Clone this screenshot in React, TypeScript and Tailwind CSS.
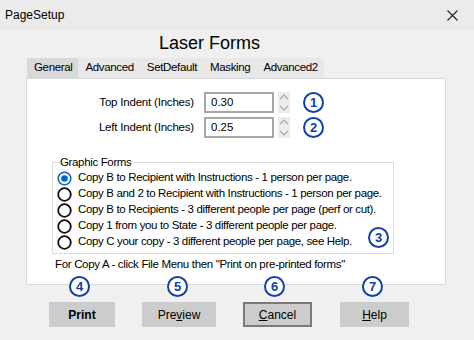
import React from "react";

const F = { fontFamily: '"Liberation Sans", Arial, sans-serif' };

function Circ({ n }: { n: number }) {
  return (
    <div className="w-[21px] h-[21px] rounded-full border-2 border-[#1040a8] bg-white flex items-center justify-center text-[13px] font-bold text-[#1040a8] leading-none">
      {n}
    </div>
  );
}

function Spinner() {
  return (
    <div className="w-[12px] h-[21px] bg-[#ececec] flex flex-col items-center justify-between py-[1px]">
      <svg width="10" height="8" viewBox="0 0 10 8">
        <path d="M1 6 L5 2 L9 6" fill="none" stroke="#a8a8a8" strokeWidth="1.2" />
      </svg>
      <svg width="10" height="8" viewBox="0 0 10 8">
        <path d="M1 2 L5 6 L9 2" fill="none" stroke="#a8a8a8" strokeWidth="1.2" />
      </svg>
    </div>
  );
}

function Radio({ checked, label }: { checked?: boolean; label: string }) {
  return (
    <div className="flex items-center h-[16px]">
      <svg width="15" height="15" viewBox="0 0 15 15" className="shrink-0">
        {checked ? (
          <>
            <circle cx="7.5" cy="7.5" r="6.3" fill="white" stroke="#0a64c8" strokeWidth="1.6" />
            <circle cx="7.5" cy="7.5" r="3.3" fill="#0a64c8" />
          </>
        ) : (
          <circle cx="7.5" cy="7.5" r="6.3" fill="white" stroke="#111" strokeWidth="1.8" />
        )}
      </svg>
      <span className="ml-[6px] text-[11.5px] tracking-[-0.35px] text-black whitespace-nowrap">{label}</span>
    </div>
  );
}

export default function App() {
  const tabs = ["General", "Advanced", "SetDefault", "Masking", "Advanced2"];
  const buttons = [
    { l: <b>Print</b>, n: 4, cls: "w-[66px]", c: "left-[20px]" },
    { l: <span>Pre<u>v</u>iew</span>, n: 5, cls: "w-[74px] ml-[27px]", c: "left-[25px]" },
    { l: <span><u>C</u>ancel</span>, n: 6, focus: true, cls: "w-[69px] ml-[27px]", c: "left-[21px]" },
    { l: <span><u>H</u>elp</span>, n: 7, cls: "w-[69px] ml-[28px]", c: "left-[22px]" },
  ];
  return (
    <div className="w-[474px] h-[340px] bg-[#f0f0f0] relative overflow-hidden flex flex-col" style={F}>
      {/* title bar */}
      <div className="h-[30px] bg-[#ebebeb] flex items-center justify-between pl-[5px] pr-[16px] shrink-0">
        <span className="text-[12px] text-black">PageSetup</span>
        <svg width="11" height="11" viewBox="0 0 11 11">
          <path d="M0.5 0.5 L10.5 10.5 M10.5 0.5 L0.5 10.5" stroke="#222" strokeWidth="1.1" />
        </svg>
      </div>

      <div className="pl-[159px] mt-[3px] h-[20px] text-[18px] leading-[20px] text-black">Laser Forms</div>

      {/* tabs */}
      <div className="mt-[5px] pl-[27px] flex h-[20px]">
        {tabs.map((t, i) => (
          <div
            key={t}
            className={
              "pl-[7px] pr-[6px] h-[20px] flex items-center text-[11.5px] tracking-[-0.35px] text-black " +
              (i === 0 ? "bg-[#d9d9d9]" : "bg-[#e8e8e8]")
            }
          >
            {t}
          </div>
        ))}
      </div>

      {/* panel */}
      <div className="ml-[26px] w-[420px] h-[207px] bg-white border border-[#d9d9d9] pt-[13px]">
        <div className="flex items-center h-[21px]">
          <div className="w-[167px] text-right text-[11.5px] tracking-[-0.2px] text-black">Top Indent (Inches)</div>
          <div className="ml-[10px] w-[70px] h-[21px] border-2 border-[#a6a6a6] flex items-center pl-[5px] text-[11.5px]">0.30</div>
          <div className="ml-[4px]"><Spinner /></div>
          <div className="ml-[13px]"><Circ n={1} /></div>
        </div>
        <div className="flex items-center h-[21px] mt-[4px]">
          <div className="w-[167px] text-right text-[11.5px] tracking-[-0.2px] text-black">Left Indent (Inches)</div>
          <div className="ml-[10px] w-[70px] h-[21px] border-2 border-[#a6a6a6] flex items-center pl-[5px] text-[11.5px]">0.25</div>
          <div className="ml-[4px]"><Spinner /></div>
          <div className="ml-[13px]"><Circ n={2} /></div>
        </div>

        <fieldset className="relative min-w-0 ml-[25px] w-[342px] mt-[17px] border border-[#dcdcdc] pl-[4px] pb-[3px]">
          <legend className="text-[11.5px] tracking-[-0.35px] leading-[14px] ml-[3px] text-black">Graphic Forms</legend>
          <div className="pt-[1px]">
            <Radio checked label="Copy B to Recipient with Instructions - 1 person per page." />
            <Radio label="Copy B and 2 to Recipient with Instructions - 1 person per page." />
            <Radio label="Copy B to Recipients - 3 different people per page (perf or cut)." />
            <Radio label="Copy 1 from you to State - 3 different people per page." />
            <Radio label="Copy C your copy - 3 different people per page, see Help." />
          </div>
          <div className="absolute right-[4px] bottom-[5px]"><Circ n={3} /></div>
        </fieldset>

        <div className="ml-[28px] mt-[3px] text-[11.5px] tracking-[-0.33px] leading-[14px] text-black whitespace-nowrap">
          For Copy A - click File Menu then "Print on pre-printed forms"
        </div>
      </div>

      {/* buttons */}
      <div className="relative mt-[17px] pl-[49px] flex">
        {buttons.map((b, i) => (
          <div key={i} className={"relative " + b.cls}>
            <div
              className={
                "w-full h-[25px] bg-[#cccccc] flex items-center justify-center text-[12px] text-black " +
                (b.focus ? "border-2 border-[#7a7a7a]" : "")
              }
            >
              {b.l}
            </div>
            <div className={"absolute top-[-26px] " + b.c}><Circ n={b.n} /></div>
          </div>
        ))}
      </div>
    </div>
  );
}
